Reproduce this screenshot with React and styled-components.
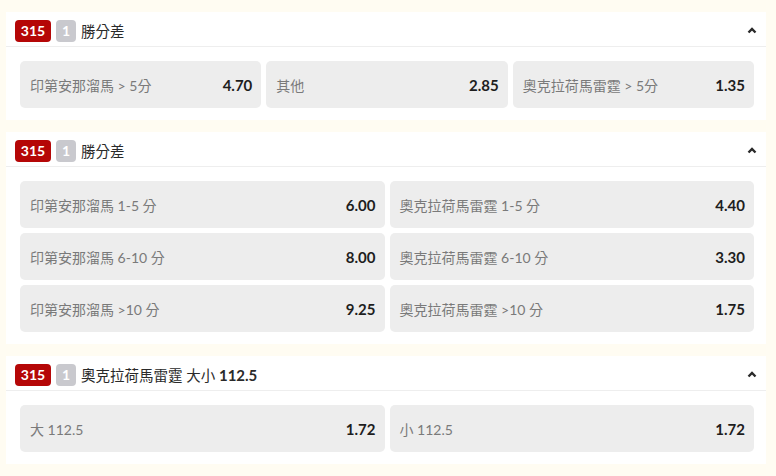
import React from "react";
import styled, { createGlobalStyle } from "styled-components";

const Global = createGlobalStyle`
  html, body { margin: 0; padding: 0; background: #fffcf2; }
  body { font-family: Lato, "Noto Sans CJK TC", sans-serif; }
`;

const Page = styled.div`
  display: flex;
  flex-direction: column;
  gap: 12px;
  padding: 12px 10px 12px 6px;
`;

const Card = styled.section`
  background: #fff;
  display: flex;
  flex-direction: column;
`;

const Header = styled.div`
  display: flex;
  align-items: center;
  box-sizing: border-box;
  height: 35px;
  padding: 3px 9px 0 9px;
  border-bottom: 1px solid #eeeeee;
  gap: 5px;
`;

const Badge = styled.span`
  display: inline-flex;
  align-items: center;
  justify-content: center;
  height: 22px;
  min-width: ${(p) => (p.$gray ? "20px" : "36px")};
  padding: 0 ${(p) => (p.$gray ? "0" : "4px")};
  box-sizing: border-box;
  border-radius: 4px;
  background: ${(p) => (p.$gray ? "#c9c9ce" : "#b50707")};
  color: #fff;
  font-size: 14px;
  font-weight: 700;
  font-family: Lato, sans-serif;
`;

const Title = styled.span`
  flex: 1;
  font-size: 14.5px;
  color: #2a2a2a;
  b { font-weight: 700; font-size: 15px; }
`;

const Grid = styled.div`
  display: grid;
  grid-template-columns: repeat(${(p) => p.$cols}, 1fr);
  gap: 5px;
  padding: 14px 12px 12px 14px;
`;

const Btn = styled.div`
  display: flex;
  align-items: center;
  justify-content: space-between;
  height: 47px;
  padding: 0 9px 0 10px;
  background: #ededed;
  border-radius: 5px;
`;

const Label = styled.span`
  font-size: 14px;
  color: #7a7a7a;
`;

const Odds = styled.span`
  font-size: 15px;
  font-weight: 700;
  color: #1e1e1e;
  font-family: Lato, sans-serif;
`;

const Chevron = () => (
  <svg width="10" height="7" viewBox="0 0 10 7">
    <polyline points="1.5,5.5 5,2 8.5,5.5" fill="none" stroke="#2a2a2a" strokeWidth="2.4" />
  </svg>
);

const markets = [
  {
    title: "勝分差",
    cols: 3,
    items: [
      ["印第安那溜馬 > 5分", "4.70"],
      ["其他", "2.85"],
      ["奧克拉荷馬雷霆 > 5分", "1.35"],
    ],
  },
  {
    title: "勝分差",
    cols: 2,
    items: [
      ["印第安那溜馬 1-5 分", "6.00"],
      ["奧克拉荷馬雷霆 1-5 分", "4.40"],
      ["印第安那溜馬 6-10 分", "8.00"],
      ["奧克拉荷馬雷霆 6-10 分", "3.30"],
      ["印第安那溜馬 >10 分", "9.25"],
      ["奧克拉荷馬雷霆 >10 分", "1.75"],
    ],
  },
  {
    title: (
      <>
        奧克拉荷馬雷霆 大小 <b>112.5</b>
      </>
    ),
    cols: 2,
    items: [
      ["大 112.5", "1.72"],
      ["小 112.5", "1.72"],
    ],
  },
];

export default function App() {
  return (
    <>
      <Global />
      <Page>
        {markets.map((m, i) => (
          <Card key={i}>
            <Header>
              <Badge>315</Badge>
              <Badge $gray>1</Badge>
              <Title>{m.title}</Title>
              <Chevron />
            </Header>
            <Grid $cols={m.cols}>
              {m.items.map(([l, o], j) => (
                <Btn key={j}>
                  <Label>{l}</Label>
                  <Odds>{o}</Odds>
                </Btn>
              ))}
            </Grid>
          </Card>
        ))}
      </Page>
    </>
  );
}
